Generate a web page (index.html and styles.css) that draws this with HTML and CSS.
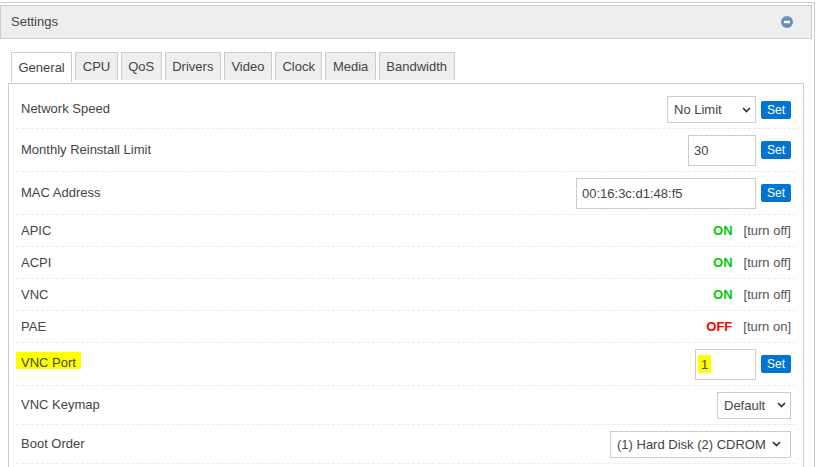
FILE: index.html
```
<!DOCTYPE html>
<html lang="en">
<head>
<meta charset="utf-8">
<title>Settings</title>
<link rel="stylesheet" href="styles.css">
</head>
<body>
<div class="frame">
  <div class="head">
    <span>Settings</span>
    <svg class="collapse" width="12" height="12" viewBox="0 0 12 12"><circle cx="6" cy="6" r="6" fill="#6d8fbb"/><rect x="3" y="4.8" width="6" height="2.4" fill="#fff"/></svg>
  </div>
  <div class="tabs">
    <a class="tab active">General</a>
    <a class="tab">CPU</a>
    <a class="tab">QoS</a>
    <a class="tab">Drivers</a>
    <a class="tab">Video</a>
    <a class="tab">Clock</a>
    <a class="tab">Media</a>
    <a class="tab">Bandwidth</a>
  </div>
  <div class="panel">
    <div class="row r-first">
      <span class="lift">Network Speed</span>
      <div class="ctl"><select class="sel w90"><option>No Limit</option></select><button class="set">Set</button></div>
    </div>
    <div class="row r-input">
      <span>Monthly Reinstall Limit</span>
      <div class="ctl"><input class="inp w68" value="30"><button class="set">Set</button></div>
    </div>
    <div class="row r-input">
      <span>MAC Address</span>
      <div class="ctl"><input class="inp w180" value="00:16:3c:d1:48:f5"><button class="set">Set</button></div>
    </div>
    <div class="row r-toggle">
      <span>APIC</span>
      <div class="ctl"><b class="on">ON</b><span class="link">[turn off]</span></div>
    </div>
    <div class="row r-toggle">
      <span>ACPI</span>
      <div class="ctl"><b class="on">ON</b><span class="link">[turn off]</span></div>
    </div>
    <div class="row r-toggle">
      <span>VNC</span>
      <div class="ctl"><b class="on">ON</b><span class="link">[turn off]</span></div>
    </div>
    <div class="row r-toggle">
      <span>PAE</span>
      <div class="ctl"><b class="off">OFF</b><span class="link">[turn on]</span></div>
    </div>
    <div class="row r-input">
      <span class="mark">VNC Port</span>
      <div class="ctl"><input class="inp w61 marked" value="1"><button class="set">Set</button></div>
    </div>
    <div class="row r-select">
      <span>VNC Keymap</span>
      <div class="ctl"><select class="sel w74"><option>Default</option></select></div>
    </div>
    <div class="row r-select">
      <span>Boot Order</span>
      <div class="ctl"><select class="sel w181"><option>(1) Hard Disk (2) CDROM</option></select></div>
    </div>
  </div>
</div>
</body>
</html>
```
FILE: styles.css
```
* { box-sizing: border-box; }
html, body { margin: 0; height: 467px; overflow: hidden; background: #fff; }
body { font: 13px/18px "Liberation Sans", Arial, sans-serif; color: #444; }
.frame {
  width: 818px;
  height: 465px;
  margin: 2px 0 0 -3px;
  padding: 2px 2px 0;
  border: 1px solid #ccc;
  border-bottom: 0;
}
.head {
  height: 34px;
  display: flex;
  align-items: center;
  justify-content: space-between;
  padding: 0 18px 0 10px;
  border: 1px solid #ccc;
  background: #eee;
}
.collapse { display: block; }
.tabs {
  display: flex;
  gap: 3px;
  margin: 13px 0 0 11px;
  height: 29px;
}
.tab {
  display: flex;
  align-items: center;
  justify-content: center;
  height: 28px;
  border: 1px solid #ccc;
  border-bottom: 0;
  background: #eee;
  padding: 0 6.5px;
}
.tab.active {
  background: #fff;
  height: 30px;
  z-index: 1;
}
.panel {
  height: 384px;
  margin: 2px 8px 0 8px;
  padding: 0 7px;
  border: 1px solid #ccc;
  border-bottom: 0;
  background: #fff;
}
.row {
  display: flex;
  align-items: center;
  justify-content: space-between;
  padding: 0 5px;
  border-bottom: 1px dashed #e2ecf4;
}
.r-first { height: 45px; padding-top: 7px; }
.lift { margin-bottom: 2px; }
.r-select { height: 39px; }
.r-input { height: 43px; }
.r-toggle { height: 32px; }
.ctl { display: flex; align-items: center; gap: 5px; }
.sel, .inp {
  font: 13px "Liberation Sans", Arial, sans-serif;
  color: #444;
  background-color: #fff;
  border: 1px solid #ccc;
  border-radius: 0;
  outline: 0;
}
.sel {
  appearance: none;
  height: 27px;
  padding: 0 0 0 6px;
  background-image: url("data:image/svg+xml,%3Csvg xmlns='http://www.w3.org/2000/svg' width='9' height='6' viewBox='0 0 9 6'%3E%3Cpath d='M1 1l3.5 3.5L8 1' fill='none' stroke='%23333' stroke-width='1.7'/%3E%3C/svg%3E");
  background-repeat: no-repeat;
  background-position: right 4px center;
}
.inp { height: 31px; padding: 0 5px; }
.w90 { width: 89px; }
.w74 { width: 74px; }
.w181 { width: 181px; background-position: right 9px center; }
.w68 { width: 68px; }
.w180 { width: 180px; }
.w61 { width: 61px; }
.set {
  width: 30px;
  height: 18px;
  padding: 0;
  border: 0;
  border-radius: 2px;
  background: #0275d1;
  color: #fff;
  font: 12px/18px "Liberation Sans", Arial, sans-serif;
}
.on, .off { font-weight: bold; margin-right: 6px; }
.on { color: #0c0; }
.off { color: #f00; }
.link { color: #555; }
.mark {
  background: #ffff00;
  margin: 0 0 7px -5px;
  padding: 4px 5px 0 5px;
  line-height: 13px;
}
.marked {
  background-image: linear-gradient(#ffff00, #ffff00);
  background-repeat: no-repeat;
  background-size: 13px 18px;
  background-position: 2px 5px;
}
```
